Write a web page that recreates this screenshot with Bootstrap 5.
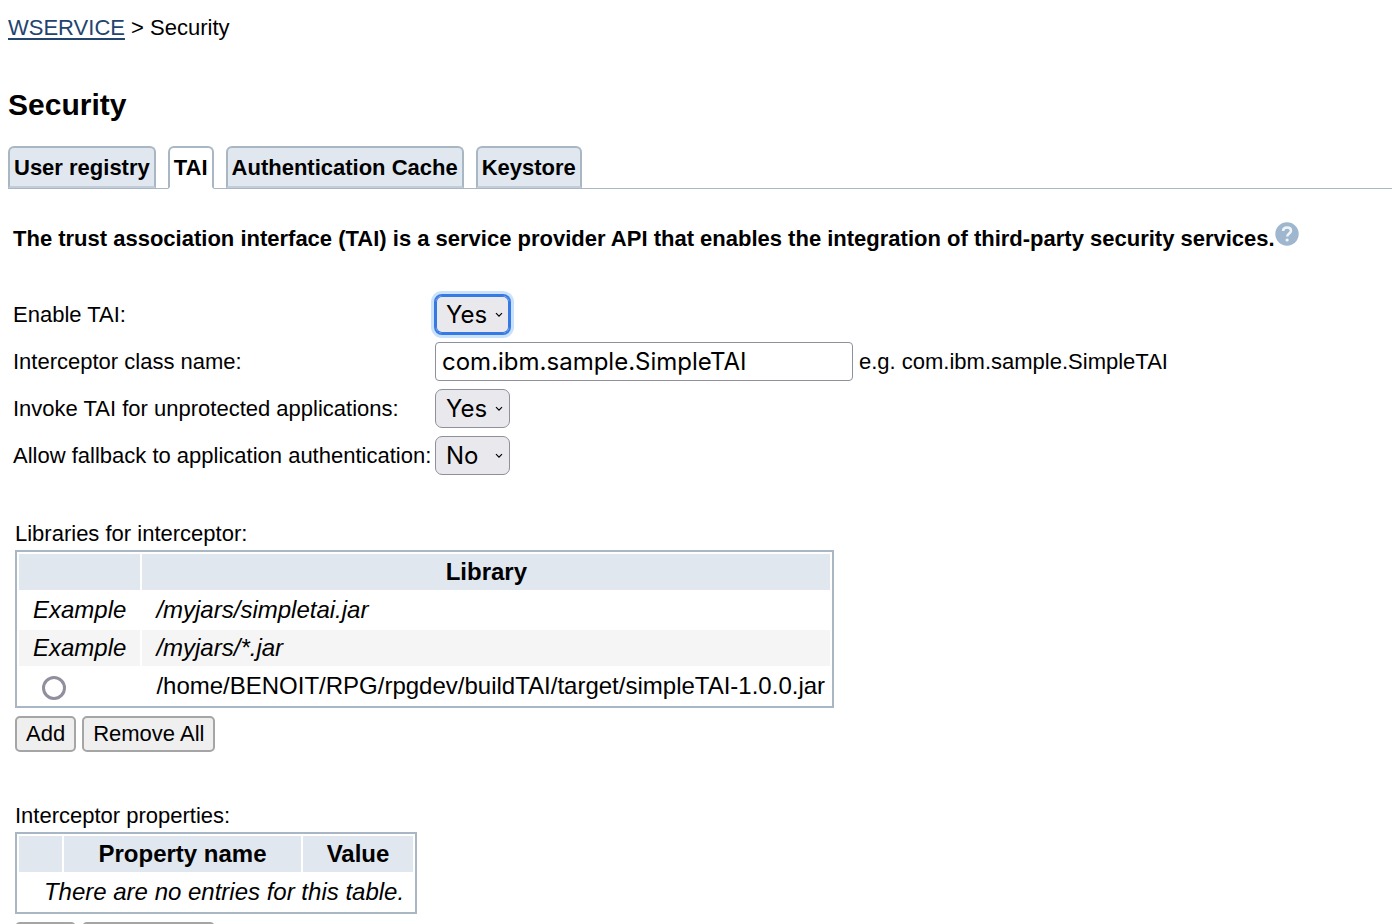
<!DOCTYPE html>
<html lang="en">
<head>
<meta charset="utf-8">
<meta name="viewport" content="width=device-width, initial-scale=1">
<title>Security</title>
<link href="https://cdn.jsdelivr.net/npm/bootstrap@5.3.0/dist/css/bootstrap.min.css" rel="stylesheet">
<style>
  :root { --line: #a9b7c5; --panel: #e1e7ef; }
  body { font-family: "Liberation Sans", Arial, sans-serif; font-size: 22px; line-height: 26px; color: #000; background: #fff; }
  .crumbs { padding: 15px 8px 0; }
  .crumbs a { color: #23446f; text-underline-offset: 3px; text-decoration-thickness: 2px; }
  .page-title { font-size: 30px; line-height: 36px; font-weight: 700; margin: 46px 8px 23px; }

  .tabs { gap: 12px; margin-left: 8px; border-bottom: 1px solid var(--line); }
  .tabs .nav-link { color: #000; font-weight: 700; line-height: 26px; padding: 7px 4px 5px; background: var(--panel); border: 2px solid var(--line); border-bottom-color: #c3cdd9; border-radius: 6px 6px 0 0; }
  .tabs .nav-link.active { background: #fff; border-bottom-color: #fff; margin-bottom: -1px; padding-bottom: 6px; }

  .intro { font-weight: 700; margin: 37px 13px 43px; }
  .help { display: inline-block; vertical-align: top; line-height: 0; margin-top: -4px; }

  .settings { display: grid; grid-template-columns: 414px 1fr; gap: 8px; margin: 0 13px; align-items: center; }
  .settings label { white-space: nowrap; }
  .field { font-family: Inter, sans-serif; font-size: 24px; line-height: 29px; height: 39px; color: #000; border: 1px solid #8f8f9d; }
  .field-text { width: 418px; padding: 4px 6px; border-radius: 4px; background: #fff; }
  .field-select { width: 75px; padding: 4px 10px; border-radius: 7px; appearance: none;
    background: #e9e9ed url("data:image/svg+xml,%3Csvg xmlns='http://www.w3.org/2000/svg' width='8' height='6'%3E%3Cpath d='M1 1.2 4 4.2 7 1.2' fill='none' stroke='%23000' stroke-width='1.2'/%3E%3C/svg%3E") no-repeat right 6px center; }
  .field-select.current, .field-select:focus { outline: 0; border-color: #3779e4; box-shadow: inset 0 0 0 1px #3779e4, 0 0 0 1px #3779e4, 0 0 0 4px #c9e1fa; }
  .hint { padding-left: 6px; }

  .block { margin: 0 15px; }
  .block-libraries { padding-top: 46px; }
  .block-properties { padding-top: 51px; }
  .grid-table { border: 2px solid var(--line); border-collapse: separate; border-spacing: 2px; font-size: 24px; line-height: 28px; margin: 3px 0 8px; }
  .grid-table th { background: var(--panel); text-align: center; }
  .grid-table th, .grid-table td { padding: 4px 14px; }
  .grid-table .alt td { background: #f5f5f5; }
  .grid-table input { appearance: none; display: block; width: 24px; height: 24px; margin: 4px 9px 0; border: 3px solid #8f8f9d; border-radius: 50%; background: #fff; }
  .grid-table input:checked { background: #3779e4; box-shadow: inset 0 0 0 3px #fff; }
  .libs th:last-child, .libs td:last-child { width: 688px; padding-right: 4px; }
  .libs th:last-child { padding-left: 4px; }
  .props .pick { width: 43px; }
  .props .name { width: 237px; }
  .props .value { width: 110px; }
  .props .none { padding-left: 24px; padding-right: 8px; }

  .actions { gap: 6px; }
  .tool { color: #000; font-size: 22px; line-height: 26px; padding: 3px 9px; background: #efefef; border: 2px solid #a5a5a5; border-radius: 5px; }
</style>
</head>
<body>
<nav class="crumbs" aria-label="Breadcrumb"><a href="#">WSERVICE</a> &gt; Security</nav>

<main>
  <h1 class="page-title">Security</h1>

  <ul class="nav tabs">
    <li class="nav-item"><a class="nav-link" href="#">User registry</a></li>
    <li class="nav-item"><a class="nav-link active" aria-current="page" href="#">TAI</a></li>
    <li class="nav-item"><a class="nav-link" href="#">Authentication Cache</a></li>
    <li class="nav-item"><a class="nav-link" href="#">Keystore</a></li>
  </ul>

  <p class="intro">The trust association interface (TAI) is a service provider API that enables the integration of third-party security services.<a class="help" href="#" aria-label="Help"><svg width="24" height="24" viewBox="0 0 24 24"><circle cx="12" cy="12" r="11.7" fill="#9fb6cf"/><path d="M8.1 9C8.2 6.7 9.8 5.6 12 5.6c2.3 0 4 1.2 4 3.1 0 2.7-3.6 2.9-3.8 5.8" fill="none" stroke="#f0f5fa" stroke-width="2.5"/><circle cx="12.1" cy="18" r="1.6" fill="#f0f5fa"/></svg></a></p>

  <form class="settings">
    <label for="enable">Enable TAI:</label>
    <div class="d-flex"><select id="enable" class="field field-select current"><option>Yes</option><option>No</option></select></div>

    <label for="cls">Interceptor class name:</label>
    <div class="d-flex align-items-center flex-wrap"><input id="cls" type="text" class="field field-text" value="com.ibm.sample.SimpleTAI"><span class="hint">e.g. com.ibm.sample.SimpleTAI</span></div>

    <label for="invoke">Invoke TAI for unprotected applications:</label>
    <div class="d-flex"><select id="invoke" class="field field-select"><option>Yes</option><option>No</option></select></div>

    <label for="fallback">Allow fallback to application authentication:</label>
    <div class="d-flex"><select id="fallback" class="field field-select"><option>No</option><option>Yes</option></select></div>
  </form>

  <section class="block block-libraries">
    <div id="libs">Libraries for interceptor:</div>
    <table class="grid-table libs" aria-labelledby="libs">
      <thead><tr><th></th><th>Library</th></tr></thead>
      <tbody>
        <tr class="fst-italic"><td>Example</td><td>/myjars/simpletai.jar</td></tr>
        <tr class="fst-italic alt"><td>Example</td><td>/myjars/*.jar</td></tr>
        <tr><td class="py-0"><input type="radio" name="library" id="lib1"></td><td><label for="lib1">/home/BENOIT/RPG/rpgdev/buildTAI/target/simpleTAI-1.0.0.jar</label></td></tr>
      </tbody>
    </table>
    <div class="d-flex actions"><button type="button" class="tool">Add</button><button type="button" class="tool">Remove All</button></div>
  </section>

  <section class="block block-properties">
    <div id="props">Interceptor properties:</div>
    <table class="grid-table props" aria-labelledby="props">
      <thead><tr><th class="pick"></th><th class="name">Property name</th><th class="value">Value</th></tr></thead>
      <tbody><tr><td colspan="3" class="none fst-italic text-center">There are no entries for this table.</td></tr></tbody>
    </table>
    <div class="d-flex actions"><button type="button" class="tool">Add</button><button type="button" class="tool">Remove All</button></div>
  </section>
</main>
<script src="https://cdn.jsdelivr.net/npm/bootstrap@5.3.0/dist/js/bootstrap.bundle.min.js"></script>
</body>
</html>
